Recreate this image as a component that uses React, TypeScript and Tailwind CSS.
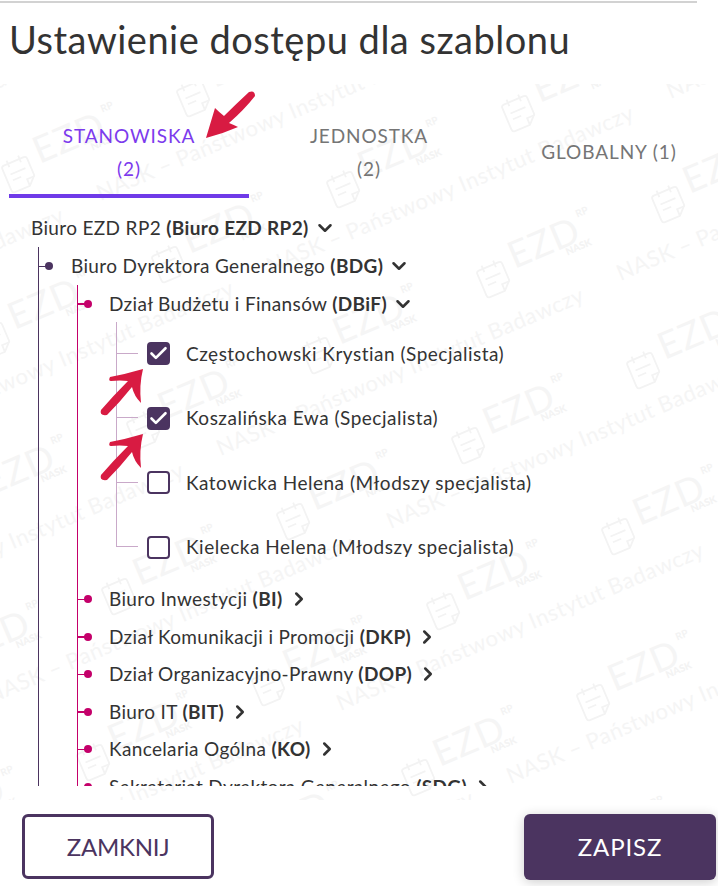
import React from "react";
import { Check, ChevronDown, ChevronRight } from "lucide-react";

const TOP = 84;

const logos: { x: number; y: number }[] = [];
for (let i = -5; i <= 5; i++) {
  for (let j = -5; j <= 6; j++) {
    const x = 518 + i * 175 + j * 150;
    const y = 410 - TOP + i * -75.5 + j * 90.5;
    if (x > -100 && x < 820 && y > -80 && y < 800) logos.push({ x, y });
  }
}

const lines: { x: number; y: number }[] = [];
for (const [sx, sy] of [
  [100, 200],
  [270, 273],
]) {
  for (let i = -3; i <= 3; i++) {
    for (let j = -3; j <= 3; j++) {
      const x = sx + i * 400 + j * 120;
      const y = sy - TOP + i * -175 + j * 255;
      if (x > -420 && x < 720 && y > -30 && y < 900) lines.push({ x, y });
    }
  }
}

function Logo({ x, y }: { x: number; y: number }) {
  return (
    <div className="absolute w-0 h-0 -rotate-[23deg]" style={{ left: x, top: y }}>
      <svg className="absolute left-[-74px] top-[-8px]" width="36" height="40" viewBox="0 0 40 44" fill="none" stroke="#f3f3f3" strokeWidth="2">
        <path d="M5 8h24a3 3 0 0 1 3 3v20l-9 9H5a3 3 0 0 1-3-3V11a3 3 0 0 1 3-3z" />
        <path d="M10 4v8M24 4v8M8 20h18M8 27h10M23 40v-8h9" />
      </svg>
      <span className="absolute left-[-36px] top-[-24px] text-[37px] leading-[44px] tracking-[1px] text-[#f5f5f5] whitespace-nowrap">EZD</span>
      <span className="absolute left-[42px] top-[-21px] text-[10px] leading-[12px] font-bold text-[#f3f3f3]">RP</span>
      <span className="absolute left-[18px] top-[10px] text-[10px] leading-[12px] font-black text-[#f3f3f3]">NASK</span>
    </div>
  );
}

function Line({ x, y }: { x: number; y: number }) {
  return (
    <div className="absolute w-0 h-0 -rotate-[23deg]" style={{ left: x, top: y }}>
      <span className="absolute left-0 top-[-22px] text-[22px] leading-[30px] tracking-[0.6px] text-[#f5f5f5] whitespace-nowrap">
        NASK – Państwowy Instytut Badawczy
      </span>
    </div>
  );
}

function Arrows() {
  const lower =
    "M143 369 Q126 374 110 377 Q108 381 111 381 Q120 380 128 381 Q113 396 101 410 Q99 416 107 415 Q120 402 132 387 Q134 396 141 403 Q139 385 143 369Z";
  return (
    <svg className="absolute inset-0 pointer-events-none" width="718" height="886" viewBox="0 0 718 886" fill="#d81b42">
      <path d="M206 138 L215 108 Q219 112 224 116 Q236 104 249 92 Q255 90 255 96 Q244 110 229 123 Q234 125 238 127 Q222 134 206 138Z" />
      <path d={lower} />
      <path d={lower} transform="translate(0 65)" />
    </svg>
  );
}

function Label({ name, code, open }: { name: string; code: string; open?: boolean }) {
  return (
    <span className="flex items-center text-[19px] text-[#333333] whitespace-nowrap tracking-[0.35px]">
      <span>
        {name} <b className="font-bold">({code})</b>
      </span>
      {open ? (
        <ChevronDown size={22} strokeWidth={2.8} className="ml-[5px] text-[#333333]" />
      ) : (
        <ChevronRight size={22} strokeWidth={2.8} className="ml-[5px] text-[#333333]" />
      )}
    </span>
  );
}

function Dept({ name, code, open }: { name: string; code: string; open?: boolean }) {
  return (
    <div className="flex items-center h-[37.5px]">
      <div className="w-[7px] h-[1.5px] bg-[#c4006a]" />
      <div className="w-[8px] h-[8px] -ml-px rounded-full bg-[#c4006a]" />
      <div className="ml-[17px]">
        <Label name={name} code={code} open={open} />
      </div>
    </div>
  );
}

function Person({ text, checked, last }: { text: string; checked?: boolean; last?: boolean }) {
  return (
    <div className="flex items-center h-[64.5px]">
      <div className={`w-[22px] self-stretch ${last ? "" : "border-l border-[#c9a9c9]"}`}>
        <div className={`h-1/2 border-b border-[#c9a9c9] ${last ? "border-l" : ""}`} />
      </div>
      <div
        className={`ml-[9px] w-[23px] h-[23px] rounded-[4px] border-[2.5px] border-[#4b3460] flex items-center justify-center ${
          checked ? "bg-[#4b3460]" : "bg-white"
        }`}
      >
        {checked && <Check size={21} strokeWidth={3} className="text-white shrink-0" />}
      </div>
      <span className="ml-[16px] text-[19px] text-[#333333] whitespace-nowrap tracking-[0.5px]">{text}</span>
    </div>
  );
}

export default function App() {
  return (
    <div
      className="relative w-[718px] h-[886px] overflow-hidden bg-white flex flex-col"
      style={{ fontFamily: "Lato, 'Noto Sans', sans-serif" }}
    >
      <div className="absolute left-0 right-0 top-[84px] h-[716px] overflow-hidden">
        {lines.map((m, i) => (
          <Line key={i} x={m.x} y={m.y} />
        ))}
        {logos.map((m, i) => (
          <Logo key={i} x={m.x} y={m.y} />
        ))}
      </div>

      <div className="relative h-[2px] w-[697px] mt-px bg-[#d2d2d2] shrink-0" />
      <h1 className="relative ml-[9px] mt-[12px] h-[48px] text-[38px] leading-[48px] text-[#333333] whitespace-nowrap font-normal tracking-[0.5px]">
        Ustawienie dostępu dla szablonu
      </h1>

      <div className="relative flex mt-[46px] ml-[9px] h-[89px] shrink-0">
        <div className="w-[240px] shrink-0 border-b-4 border-[#6f3ae8] flex flex-col items-center justify-center text-[19px] leading-[33px] text-[#7c3aed] tracking-[0.9px]">
          <span>STANOWISKA</span>
          <span>(2)</span>
        </div>
        <div className="w-[240px] shrink-0 flex flex-col items-center justify-center pb-[4px] text-[19px] leading-[33px] text-[#757575] tracking-[0.9px]">
          <span>JEDNOSTKA</span>
          <span>(2)</span>
        </div>
        <div className="w-[240px] shrink-0 flex items-center justify-center pb-[4px] text-[19px] leading-[33px] text-[#757575] tracking-[0.9px]">
          GLOBALNY (1)
        </div>
      </div>

      <div className="relative h-[588px] overflow-hidden pl-[31px] pt-[11px] shrink-0">
        <div className="h-[38px] flex items-center">
          <Label name="Biuro EZD RP2" code="Biuro EZD RP2" open />
        </div>
        <div className="ml-[7px] border-l border-[#4b3460]">
          <div className="flex items-center h-[38px]">
            <div className="w-[7px] h-px bg-[#4b3460]" />
            <div className="w-[8px] h-[8px] -ml-px rounded-full bg-[#4b3460]" />
            <div className="ml-[18px]">
              <Label name="Biuro Dyrektora Generalnego" code="BDG" open />
            </div>
          </div>
          <div className="ml-[38px] border-l border-[#c4006a]">
            <Dept name="Dział Budżetu i Finansów" code="DBiF" open />
            <div className="ml-[38px] -mt-px">
              <Person text="Częstochowski Krystian (Specjalista)" checked />
              <Person text="Koszalińska Ewa (Specjalista)" checked />
              <Person text="Katowicka Helena (Młodszy specjalista)" />
              <Person text="Kielecka Helena (Młodszy specjalista)" last />
            </div>
            <div className="mt-[1px]">
              <Dept name="Biuro Inwestycji" code="BI" />
              <Dept name="Dział Komunikacji i Promocji" code="DKP" />
              <Dept name="Dział Organizacyjno-Prawny" code="DOP" />
              <Dept name="Biuro IT" code="BIT" />
              <Dept name="Kancelaria Ogólna" code="KO" />
              <Dept name="Sekretariat Dyrektora Generalnego" code="SDG" />
            </div>
          </div>
        </div>
      </div>

      <div className="relative flex justify-between pl-[22px] pr-[2px] pt-[28px]">
        <button className="w-[192px] h-[65px] rounded-[6px] border-[3px] border-[#4b3460] bg-white text-[24px] text-[#4b3460] tracking-[-0.2px]">
          ZAMKNIJ
        </button>
        <button className="w-[192px] h-[66px] rounded-[6px] bg-[#4b3460] text-[24px] text-white tracking-[0.9px] shadow-[0_2px_12px_rgba(0,0,0,0.2)]">
          ZAPISZ
        </button>
      </div>

      <Arrows />
    </div>
  );
}
